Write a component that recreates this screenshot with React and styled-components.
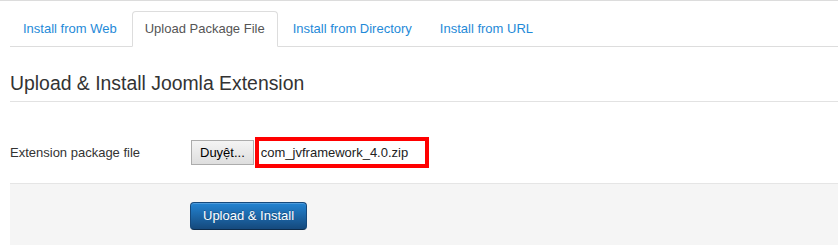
import React from "react"
import styled, { createGlobalStyle } from "styled-components"

const GlobalStyle = createGlobalStyle`
    html, body {
        margin: 0;
        padding: 0;
        background: #fff;
    }
    body {
        font-family: "Liberation Sans", Arial, sans-serif;
        font-size: 13px;
        color: #333;
    }
`

const Page = styled.div`
    border-top: 1px solid #dcdcdc;
    padding-left: 10px;
`

const Tabs = styled.ul`
    display: flex;
    list-style: none;
    margin: 10px 0 0;
    padding: 0;
    border-bottom: 1px solid #ddd;
`

const Tab = styled.li`
    margin-bottom: -1px;
    margin-right: 2px;
`

const TabLink = styled.a`
    display: block;
    padding: 8px 12px;
    line-height: 18px;
    border: 1px solid ${({ active }) => (active ? "#ddd" : "transparent")};
    border-bottom-color: transparent;
    border-radius: 4px 4px 0 0;
    background: ${({ active }) => (active ? "#fff" : "transparent")};
    color: ${({ active }) => (active ? "#555" : "#1f8ad8")};
    text-decoration: none;
    cursor: pointer;
`

const Heading = styled.h3`
    margin: 23px 0 0;
    padding-bottom: 5px;
    font-size: 19.4px;
    line-height: 26px;
    font-weight: normal;
    color: #333;
    border-bottom: 1px solid #e2e2e2;
`

const ControlGroup = styled.div`
    display: flex;
    align-items: center;
    margin-top: 35px;
`

const Label = styled.label`
    width: 180px;
    line-height: 18px;
    color: #333;
`

const Controls = styled.div`
    display: flex;
    align-items: center;
`

const BrowseButton = styled.button`
    margin-left: 1px;
    height: 25px;
    padding: 0 8px;
    font-family: "Liberation Sans", Arial, sans-serif;
    font-size: 13px;
    color: #000;
    background: linear-gradient(#f4f4f4, #dedede);
    border: 1px solid #acacac;
    border-radius: 0;
`

const FileName = styled.span`
    margin-left: 1px;
    height: 23px;
    line-height: 23px;
    padding: 0 17px 0 2px;
    border: 4px solid #ff0000;
    color: #222;
`

const FormActions = styled.div`
    margin-top: 15px;
    padding: 18px 0 18px 180px;
    background: #f5f5f5;
    border-top: 1px solid #e5e5e5;
`

const PrimaryButton = styled.button`
    padding: 4px 12px;
    line-height: 18px;
    font-family: "Liberation Sans", Arial, sans-serif;
    font-size: 13px;
    color: #fff;
    text-shadow: 0 -1px 0 rgba(0, 0, 0, 0.25);
    background: linear-gradient(#2384d3, #15497c);
    border: 1px solid #15497c;
    border-bottom-color: #0c2c4c;
    border-radius: 4px;
    box-shadow: inset 0 1px 0 rgba(255, 255, 255, 0.2);
    cursor: pointer;
`

const tabs = [
    "Install from Web",
    "Upload Package File",
    "Install from Directory",
    "Install from URL",
]

export default function App() {
    return (
        <>
            <GlobalStyle />
            <Page>
                <Tabs>
                    {tabs.map((tab) => (
                        <Tab key={tab}>
                            <TabLink active={tab === "Upload Package File"}>
                                {tab}
                            </TabLink>
                        </Tab>
                    ))}
                </Tabs>
                <Heading>Upload &amp; Install Joomla Extension</Heading>
                <ControlGroup>
                    <Label>Extension package file</Label>
                    <Controls>
                        <BrowseButton>Duyệt...</BrowseButton>
                        <FileName>com_jvframework_4.0.zip</FileName>
                    </Controls>
                </ControlGroup>
                <FormActions>
                    <PrimaryButton>Upload &amp; Install</PrimaryButton>
                </FormActions>
            </Page>
        </>
    )
}
